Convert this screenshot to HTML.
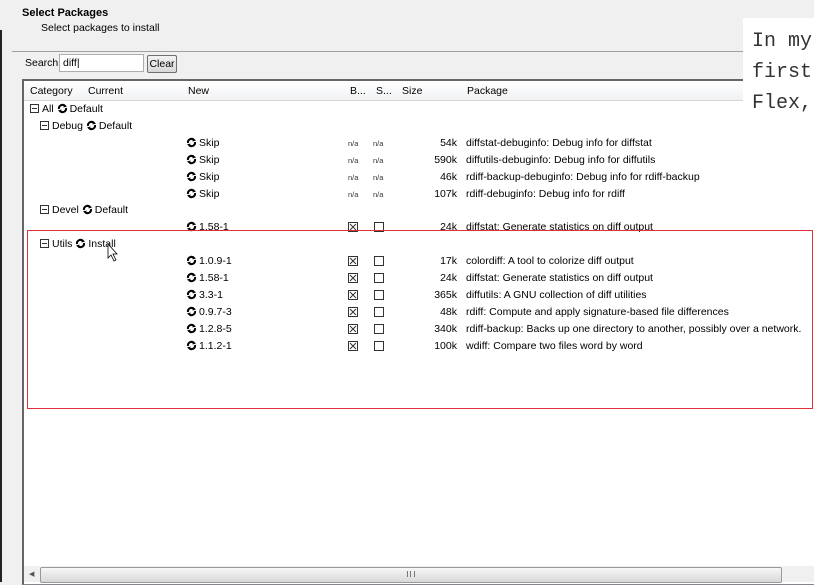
<!DOCTYPE html>
<html><head><style>
body{margin:0;width:814px;height:582px;overflow:hidden;background:#f0f0f0;font-family:"Liberation Sans",Arial,sans-serif;font-size:10.5px;color:#000;position:relative}
.a{position:absolute;white-space:nowrap}
.ic{display:inline-block;width:11px;height:11px;vertical-align:-2px;margin-right:2px}
.mn{position:absolute;width:7px;height:7px;border:1px solid #333;background:#fff}
.mn:after{content:"";position:absolute;left:1px;top:3px;width:5px;height:1px;background:#333}
.sz{position:absolute;width:60px;text-align:right}
.na{position:absolute;font-size:7.5px;color:#333}
</style></head><body>
<div class="a" style="left:0;top:30px;width:2px;height:552px;background:#222"></div>
<div class="a" style="left:22px;top:7px;font-weight:bold;font-size:11px">Select Packages</div>
<div class="a" style="left:41px;top:22px">Select packages to install</div>
<div class="a" style="left:12px;top:51px;width:802px;height:1px;background:#a0a0a0"></div>
<div class="a" style="left:25px;top:57px">Search</div>
<div class="a" style="left:59px;top:54px;width:83px;height:16px;background:#fff;border:1px solid #abadb3"></div>
<div class="a" style="left:63px;top:57px">diff|</div>
<div class="a" style="left:147px;top:55px;width:28px;height:16px;border:1px solid #707070;background:linear-gradient(#f2f2f2,#d8d8d8);border-radius:2px;text-align:center;line-height:16px">Clear</div>
<div class="a" style="left:22px;top:79px;width:800px;height:503px;background:#fff;border:1px solid #828790;border-top:2px solid #666;border-left:2px solid #666"></div>
<div class="a" style="left:24px;top:81px;width:790px;height:19px;background:linear-gradient(#fff,#f1f2f4);border-bottom:1px solid #d5d5d5"></div>
<div class="a" style="left:30px;top:85px">Category</div>
<div class="a" style="left:88px;top:85px">Current</div>
<div class="a" style="left:188px;top:85px">New</div>
<div class="a" style="left:350px;top:85px">B...</div>
<div class="a" style="left:376px;top:85px">S...</div>
<div class="a" style="left:402px;top:85px">Size</div>
<div class="a" style="left:467px;top:85px">Package</div>
<svg width="0" height="0" style="position:absolute"><defs><symbol id="r" viewBox="0 0 11 11"><path d="M2 6 A3.5 3.5 0 0 1 8 3" stroke="#000" stroke-width="2" fill="none"/><path d="M9 5 A3.5 3.5 0 0 1 3 8" stroke="#000" stroke-width="2" fill="none"/><path d="M7 1 L10 3.5 L6.5 4.5Z M4 10 L1 7.5 L4.5 6.5Z"/></symbol></defs></svg>
<div class="mn" style="left:30px;top:104px"></div><div class="a" style="left:42px;top:103px">All <svg class="ic"><use href="#r"/></svg>Default</div>
<div class="mn" style="left:40px;top:121px"></div><div class="a" style="left:52px;top:120px">Debug <svg class="ic"><use href="#r"/></svg>Default</div>
<div class="mn" style="left:40px;top:205px"></div><div class="a" style="left:52px;top:204px">Devel <svg class="ic"><use href="#r"/></svg>Default</div>
<div class="mn" style="left:40px;top:239px"></div><div class="a" style="left:52px;top:238px">Utils <svg class="ic"><use href="#r"/></svg>Install</div>

<div class="a" style="left:186px;top:137px"><svg class="ic"><use href="#r"/></svg>Skip</div>
<div class="na" style="left:348px;top:139px">n/a</div><div class="na" style="left:373px;top:139px">n/a</div>
<div class="sz" style="left:397px;top:137px">54k</div><div class="a" style="left:466px;top:137px">diffstat-debuginfo: Debug info for diffstat</div>
<div class="a" style="left:186px;top:154px"><svg class="ic"><use href="#r"/></svg>Skip</div>
<div class="na" style="left:348px;top:156px">n/a</div><div class="na" style="left:373px;top:156px">n/a</div>
<div class="sz" style="left:397px;top:154px">590k</div><div class="a" style="left:466px;top:154px">diffutils-debuginfo: Debug info for diffutils</div>
<div class="a" style="left:186px;top:171px"><svg class="ic"><use href="#r"/></svg>Skip</div>
<div class="na" style="left:348px;top:173px">n/a</div><div class="na" style="left:373px;top:173px">n/a</div>
<div class="sz" style="left:397px;top:171px">46k</div><div class="a" style="left:466px;top:171px">rdiff-backup-debuginfo: Debug info for rdiff-backup</div>
<div class="a" style="left:186px;top:188px"><svg class="ic"><use href="#r"/></svg>Skip</div>
<div class="na" style="left:348px;top:190px">n/a</div><div class="na" style="left:373px;top:190px">n/a</div>
<div class="sz" style="left:397px;top:188px">107k</div><div class="a" style="left:466px;top:188px">rdiff-debuginfo: Debug info for rdiff</div>

<div class="a" style="left:186px;top:221px"><svg class="ic"><use href="#r"/></svg>1.58-1</div>
<div class="sz" style="left:397px;top:221px">24k</div><div class="a" style="left:466px;top:221px">diffstat: Generate statistics on diff output</div>

<div class="a" style="left:186px;top:255px"><svg class="ic"><use href="#r"/></svg>1.0.9-1</div>
<div class="sz" style="left:397px;top:255px">17k</div><div class="a" style="left:466px;top:255px">colordiff: A tool to colorize diff output</div>
<div class="a" style="left:186px;top:272px"><svg class="ic"><use href="#r"/></svg>1.58-1</div>
<div class="sz" style="left:397px;top:272px">24k</div><div class="a" style="left:466px;top:272px">diffstat: Generate statistics on diff output</div>
<div class="a" style="left:186px;top:289px"><svg class="ic"><use href="#r"/></svg>3.3-1</div>
<div class="sz" style="left:397px;top:289px">365k</div><div class="a" style="left:466px;top:289px">diffutils: A GNU collection of diff utilities</div>
<div class="a" style="left:186px;top:306px"><svg class="ic"><use href="#r"/></svg>0.9.7-3</div>
<div class="sz" style="left:397px;top:306px">48k</div><div class="a" style="left:466px;top:306px">rdiff: Compute and apply signature-based file differences</div>
<div class="a" style="left:186px;top:323px"><svg class="ic"><use href="#r"/></svg>1.2.8-5</div>
<div class="sz" style="left:397px;top:323px">340k</div><div class="a" style="left:466px;top:323px">rdiff-backup: Backs up one directory to another, possibly over a network.</div>
<div class="a" style="left:186px;top:340px"><svg class="ic"><use href="#r"/></svg>1.1.2-1</div>
<div class="sz" style="left:397px;top:340px">100k</div><div class="a" style="left:466px;top:340px">wdiff: Compare two files word by word</div>

<svg class="a" style="left:0;top:0" width="814" height="582">
<g stroke="#333" fill="none" stroke-width="1">
<path d="M348.5 222.5h9v9h-9zM350 224l6 6M356 224l-6 6"/>
<path d="M348.5 256.5h9v9h-9zM350 258l6 6M356 258l-6 6"/>
<path d="M348.5 273.5h9v9h-9zM350 275l6 6M356 275l-6 6"/>
<path d="M348.5 290.5h9v9h-9zM350 292l6 6M356 292l-6 6"/>
<path d="M348.5 307.5h9v9h-9zM350 309l6 6M356 309l-6 6"/>
<path d="M348.5 324.5h9v9h-9zM350 326l6 6M356 326l-6 6"/>
<path d="M348.5 341.5h9v9h-9zM350 343l6 6M356 343l-6 6"/>
<path d="M374.5 222.5h9v9h-9zM374.5 256.5h9v9h-9zM374.5 273.5h9v9h-9zM374.5 290.5h9v9h-9zM374.5 307.5h9v9h-9zM374.5 324.5h9v9h-9zM374.5 341.5h9v9h-9z"/>
</g>
<rect x="27.5" y="230.5" width="785" height="178" fill="none" stroke="#e0303a" stroke-width="1"/>
<path d="M108 244 L108 258 L111 255 L114 261 L116 260 L113 254 L117 254Z" fill="#fff" stroke="#000" stroke-width="0.8"/>
</svg>
<div class="a" style="left:24px;top:566px;width:790px;height:16px;background:#f0f0f0"></div>
<div class="a" style="left:29px;top:570px;font-size:7px;color:#555">◀</div>
<div class="a" style="left:40px;top:567px;width:740px;height:14px;border:1px solid #999;border-radius:2px;background:linear-gradient(#f7f7f7,#d8d8d8)"></div>
<div class="a" style="left:407px;top:571px;width:6px;height:6px;border-left:1px solid #777;border-right:1px solid #777"><div style="margin-left:2px;width:1px;height:6px;background:#777"></div></div>
<div class="a" style="left:743px;top:18px;width:71px;height:92px;background:#fff"></div>
<div class="a" style="left:752px;top:26px;font-family:'Liberation Mono',monospace;font-size:20px;line-height:31px;color:#333">In my<br>first<br>Flex,</div>
</body></html>
